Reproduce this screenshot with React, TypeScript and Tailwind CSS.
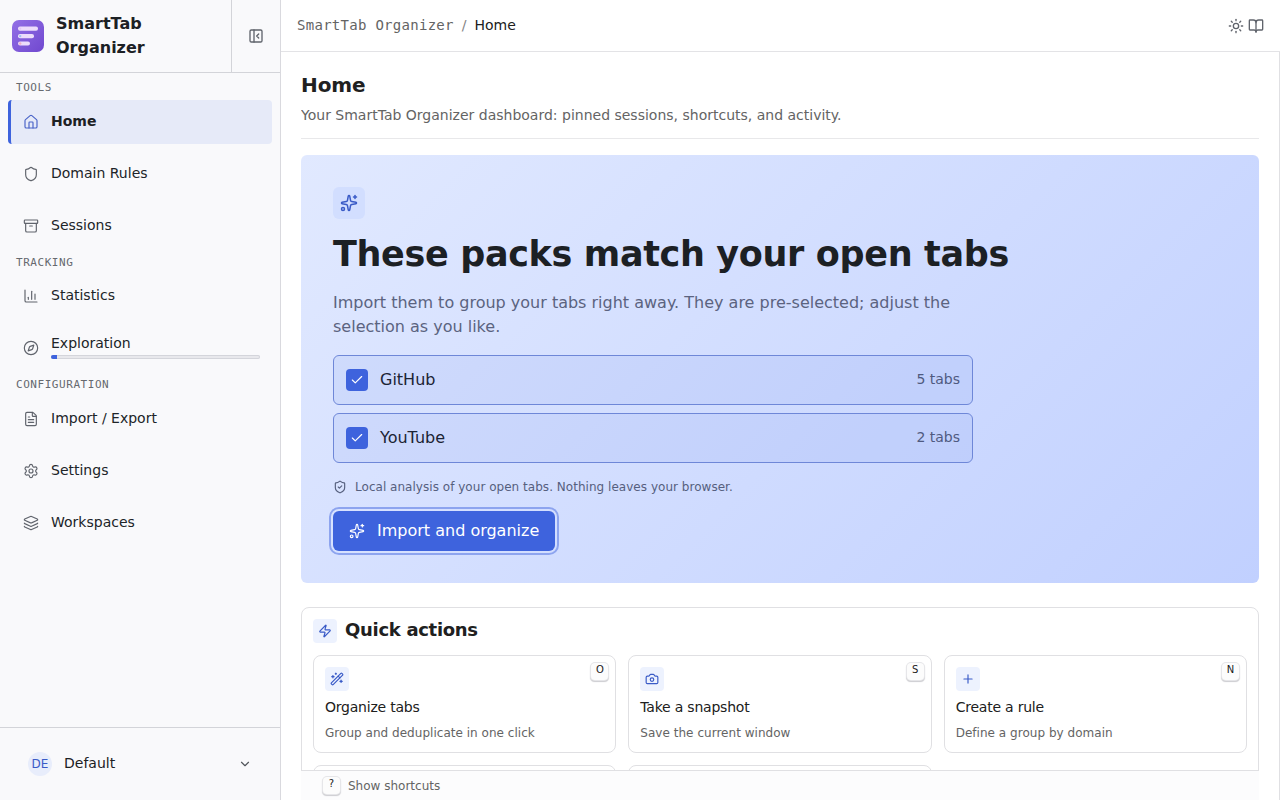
import type { ReactNode } from "react";
import {
  Archive,
  BookOpen,
  Camera,
  ChartColumn,
  Check,
  ChevronDown,
  Compass,
  FileText,
  House,
  Layers,
  PanelLeftClose,
  Plus,
  Settings,
  Shield,
  ShieldCheck,
  Sparkles,
  Sun,
  WandSparkles,
  Zap,
  type LucideIcon,
} from "lucide-react";

interface NavItem {
  label: string;
  icon: LucideIcon;
  active?: boolean;
  progress?: number;
}

interface NavSection {
  title: string;
  titleClass: string;
  items: NavItem[];
}

const sections: NavSection[] = [
  {
    title: "TOOLS",
    titleClass: "h-[26px] pt-[3px]",
    items: [
      { label: "Home", icon: House, active: true },
      { label: "Domain Rules", icon: Shield },
      { label: "Sessions", icon: Archive },
    ],
  },
  {
    title: "TRACKING",
    titleClass: "h-[26px] pt-[5px]",
    items: [
      { label: "Statistics", icon: ChartColumn },
      { label: "Exploration", icon: Compass, progress: 3 },
    ],
  },
  {
    title: "CONFIGURATION",
    titleClass: "h-[27px] pt-1",
    items: [
      { label: "Import / Export", icon: FileText },
      { label: "Settings", icon: Settings },
      { label: "Workspaces", icon: Layers },
    ],
  },
];

const packs = [
  { name: "GitHub", tabs: 5 },
  { name: "YouTube", tabs: 2 },
];

const actions = [
  { title: "Organize tabs", text: "Group and deduplicate in one click", key: "O", icon: WandSparkles },
  { title: "Take a snapshot", text: "Save the current window", key: "S", icon: Camera },
  { title: "Create a rule", text: "Define a group by domain", key: "N", icon: Plus },
];

function Logo() {
  return (
    <svg width="32" height="32" viewBox="0 0 32 32" className="shrink-0">
      <defs>
        <linearGradient id="logo" x1="0" y1="0" x2="1" y2="1">
          <stop offset="0" stopColor="#9370e6" />
          <stop offset="1" stopColor="#7048cf" />
        </linearGradient>
      </defs>
      <rect width="32" height="32" rx="7" fill="url(#logo)" />
      <rect x="6" y="6.5" width="20" height="4.2" rx="2" fill="#ecdcfb" />
      <rect x="6" y="14" width="16" height="4.2" rx="2" fill="#ecdcfb" />
      <rect x="6" y="21.4" width="12" height="4.2" rx="2" fill="#ecdcfb" />
      <circle cx="8.2" cy="8.6" r="1.1" fill="#e2c8f6" />
      <circle cx="8.2" cy="16.1" r="1.2" fill="#9cc4f2" />
      <circle cx="8.2" cy="23.5" r="1.2" fill="#f0b0c6" />
    </svg>
  );
}

function Kbd({ children }: { children: ReactNode }) {
  return (
    <kbd className="flex h-[17px] w-[17px] justify-center rounded-[4px] bg-[#fcfcfc] font-['DejaVu_Sans'] text-[10px] leading-[14px] text-[#202020] shadow-[0_0_0_1px_#e6e6e9,0_1.5px_1px_0.5px_#cdcdd1]">
      {children}
    </kbd>
  );
}

function NavRow({ item }: { item: NavItem }) {
  const Icon = item.icon;
  return (
    <div
      className={`flex h-11 items-center gap-3 rounded-[4px] border-l-[3px] pl-3 pr-3 text-[14px] ${
        item.active
          ? "border-[#3e63dd] bg-[#e6eaf8] font-bold text-[#1c2024]"
          : "border-transparent text-[#202428]"
      }`}
    >
      <Icon
        size={16}
        strokeWidth={1.75}
        className={`shrink-0 ${item.active ? "text-[#4a64c8]" : "text-[#60646c]"}`}
      />
      {item.progress === undefined ? (
        <span className="pb-0.5 leading-5">{item.label}</span>
      ) : (
        <div className="flex-1 pb-1">
          <div className="leading-5">{item.label}</div>
          <div className="mt-[2px] h-1 overflow-hidden rounded-full bg-[#e8e8ec] shadow-[inset_0_0_0_1px_#d4d5db]">
            <div className="h-full bg-[#3e63dd]" style={{ width: `${item.progress}%` }} />
          </div>
        </div>
      )}
    </div>
  );
}

function Sidebar() {
  return (
    <aside className="flex w-[281px] shrink-0 flex-col border-r border-[#d9d9de] bg-[#f9f9fb]">
      <div className="flex h-[73px] border-b border-[#d3d4d9]">
        <div className="flex w-[231px] items-center gap-3 px-3">
          <Logo />
          <div className="w-40 text-[16px] font-bold leading-6 text-[#1c2024]">SmartTab Organizer</div>
        </div>
        <div className="flex flex-1 items-center justify-center border-l border-[#d3d4d9]">
          <PanelLeftClose size={16} strokeWidth={2} className="text-[#60646c]" />
        </div>
      </div>

      <nav className="flex flex-1 flex-col px-2 pt-px">
        {sections.map((section) => (
          <div key={section.title}>
            <div
              className={`flex items-center px-2 font-['DejaVu_Sans_Mono'] text-[11px] tracking-[0.55px] text-[#66696f] ${section.titleClass}`}
            >
              {section.title}
            </div>
            <div className="flex flex-col gap-2">
              {section.items.map((item) => (
                <NavRow key={item.label} item={item} />
              ))}
            </div>
          </div>
        ))}
      </nav>

      <div className="flex h-[73px] items-center border-t border-[#d3d4d9] pl-7 pr-7 text-[14px] text-[#1c2024]">
        <span className="flex h-6 w-6 items-center justify-center rounded-full bg-[#e8edfb] text-[12px] text-[#3a5bc7]">
          DE
        </span>
        <span className="flex-1 pb-0.5 pl-3">Default</span>
        <ChevronDown size={14} strokeWidth={2} className="text-[#50545a]" />
      </div>
    </aside>
  );
}

function Topbar() {
  return (
    <header className="flex h-[52px] shrink-0 items-center justify-between border-b border-[#e3e3e6] pl-4 pr-4">
      <div className="flex items-center pb-0.5 text-[14px] leading-5">
        <span className="font-['DejaVu_Sans_Mono'] tracking-[0.28px] text-[#646464]">SmartTab Organizer</span>
        <span className="px-2 text-[#838383]">/</span>
        <span className="text-[#202020]">Home</span>
      </div>
      <div className="flex gap-1 text-[#60646c]">
        <Sun size={16} strokeWidth={2} />
        <BookOpen size={16} strokeWidth={2} />
      </div>
    </header>
  );
}

function Hero() {
  return (
    <section className="mt-4 flex h-[428px] shrink-0 flex-col items-start rounded-[6px] bg-linear-135 from-[#e1e9ff] to-[#c1d0ff] p-8">
      <div className="flex h-8 w-8 items-center justify-center rounded-[6px] bg-[#d2deff] text-[#3a5bc7]">
        <Sparkles size={18} strokeWidth={2} />
      </div>
      <h2 className="mt-[15px] text-[35px] font-bold leading-10 tracking-[-0.35px] text-[#1c2024]">
        These packs match your open tabs
      </h2>
      <p className="mt-[17px] w-[640px] text-[16px] leading-6 text-[#5b6380]">
        Import them to group your tabs right away. They are pre-selected; adjust the selection as you like.
      </p>
      <div className="mt-4 flex w-[640px] flex-col gap-2">
        {packs.map((pack) => (
          <div
            key={pack.name}
            className="flex h-[50px] items-center rounded-[6px] border border-[#6e87d8] bg-[#3e63dd]/8 px-3"
          >
            <span className="flex h-[22px] w-[22px] items-center justify-center rounded-[4px] bg-[#3e63dd] text-white">
              <Check size={14} strokeWidth={2} />
            </span>
            <span className="flex-1 pl-3 text-[16px] leading-6 text-[#1c2434]">{pack.name}</span>
            <span className="pb-px text-[14px] text-[#4f5a80]">{pack.tabs} tabs</span>
          </div>
        ))}
      </div>
      <div className="mt-4 flex h-4 items-center gap-2 text-[12px] leading-4 tracking-[0.03px] text-[#56607e]">
        <ShieldCheck size={14} strokeWidth={2} />
        Local analysis of your open tabs. Nothing leaves your browser.
      </div>
      <button className="mt-4 flex h-10 w-[222px] items-center gap-3 rounded-[6px] bg-[#3e63dd] pl-4 text-[16px] text-white outline-2 outline-offset-2 outline-[#8da4ef]">
        <Sparkles size={16} strokeWidth={1.75} />
        Import and organize
      </button>
    </section>
  );
}

function QuickActions() {
  return (
    <section className="mt-6 h-[260px] shrink-0 rounded-[8px] border border-[#e0e0e3] px-[11px] pt-[11px]">
      <div className="flex h-6 items-center gap-2">
        <span className="flex h-6 w-6 items-center justify-center rounded-[4px] bg-[#edf2fe] text-[#3a5bc7]">
          <Zap size={14} strokeWidth={2} />
        </span>
        <h3 className="pb-0.5 text-[18px] font-bold leading-6 tracking-[-0.3px] text-[#202020]">Quick actions</h3>
      </div>
      <div className="mt-3 grid grid-cols-3 gap-3">
        {actions.map(({ title, text, key, icon: Icon }) => (
          <div key={title} className="relative h-[98px] rounded-[8px] border border-[#e0e0e3] p-[11px]">
            <span className="flex h-6 w-6 items-center justify-center rounded-[4px] bg-[#edf2fe] text-[#3a5bc7]">
              <Icon size={14} strokeWidth={2} />
            </span>
            <div className="mt-1.5 text-[14px] leading-5 tracking-[-0.22px] text-[#202020]">{title}</div>
            <div className="mt-2 text-[12px] leading-4 tracking-[0.03px] text-[#646464]">{text}</div>
            <div className="absolute right-[7px] top-[7px]">
              <Kbd>{key}</Kbd>
            </div>
          </div>
        ))}
        <div className="h-[98px] rounded-[8px] border border-[#e0e0e3]" />
        <div className="h-[98px] rounded-[8px] border border-[#e0e0e3]" />
      </div>
    </section>
  );
}

export default function App() {
  return (
    <div className="flex h-[800px] w-[1280px] overflow-hidden bg-white font-['DejaVu_Sans',sans-serif]">
      <Sidebar />
      <div className="flex min-w-0 flex-1 flex-col">
        <Topbar />
        <main className="flex min-h-0 flex-1 flex-col border-r border-[#e0e0e3] px-5">
          <div className="flex min-h-0 flex-1 flex-col overflow-hidden">
            <div className="h-[87px] shrink-0 border-b border-[#e8e8ea] pt-[19px]">
              <h1 className="text-[20px] font-bold leading-7 tracking-[-0.1px] text-[#202020]">Home</h1>
              <p className="mt-1.5 text-[14px] leading-5 text-[#646464]">
                Your SmartTab Organizer dashboard: pinned sessions, shortcuts, and activity.
              </p>
            </div>
            <Hero />
            <QuickActions />
          </div>
          <footer className="flex h-[30px] shrink-0 items-center gap-2 border-t border-[#e0e0e3] bg-[#fcfcfd] pl-[22px] text-[12px] text-[#646464]">
            <Kbd>?</Kbd>
            <span>Show shortcuts</span>
          </footer>
        </main>
      </div>
    </div>
  );
}
